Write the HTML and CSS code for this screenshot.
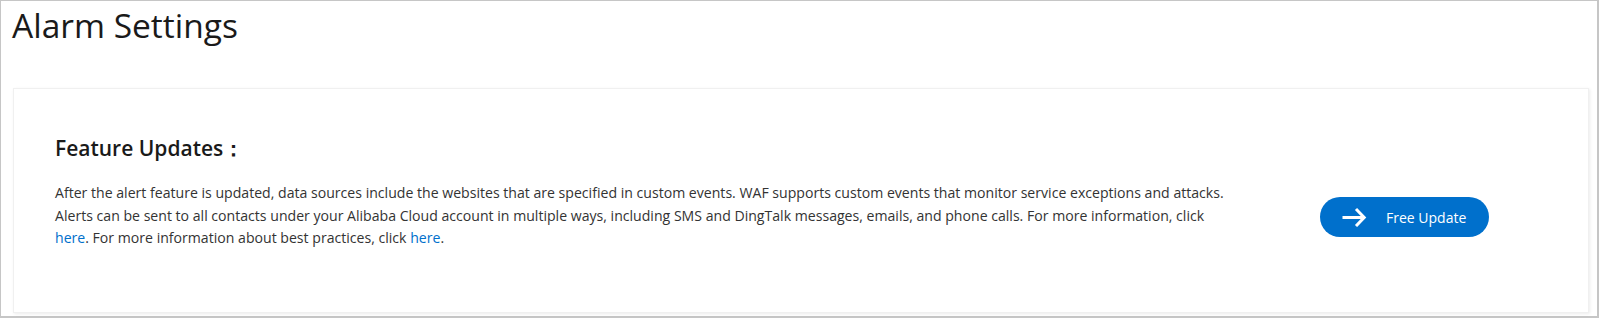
FILE: index.html
```html
<!DOCTYPE html>
<html lang="en">
<head>
<meta charset="utf-8">
<title>Alarm Settings</title>
<link rel="stylesheet" href="styles.css">
</head>
<body>
<div class="frame">
  <h1 class="page-title">Alarm Settings</h1>
  <section class="card">
    <div class="content">
      <h2 class="card-title">Feature Updates：</h2>
      <p class="desc">After the alert feature is updated, data sources include the websites that are specified in custom events. WAF supports custom events that monitor service exceptions and attacks. Alerts can be sent to all contacts under your Alibaba Cloud account in multiple ways, including SMS and DingTalk messages, emails, and phone calls. For more information, click <a href="#" class="link">here</a>. For more information about best practices, click <a href="#" class="link">here</a>.</p>
    </div>
    <button class="update-btn" type="button">
      <svg class="arrow" width="26" height="20" viewBox="0 0 26 20" aria-hidden="true">
        <path d="M1.5 10.5 H23 M15 2 L23.2 10.5 L15 19" fill="none" stroke="#fff" stroke-width="3" stroke-linecap="butt" stroke-linejoin="miter"/>
      </svg>
      <span>Free Update</span>
    </button>
  </section>
</div>
</body>
</html>
```
FILE: styles.css
```css
* { box-sizing: border-box; }
html, body { margin: 0; padding: 0; background: #fff; }
body {
  font-family: "Open Sans", "Noto Sans", sans-serif;
  color: #333;
}
.frame {
  width: 1599px;
  height: 318px;
  border: 1px solid #c6c6c6;
  border-right-width: 2px;
  border-bottom-width: 2px;
  display: flex;
  flex-direction: column;
}
.page-title {
  margin: 0;
  padding: 0 0 0 11px;
  font-size: 33.5px;
  font-weight: 400;
  line-height: 48px;
  color: #1a1a1a;
  height: 87px;
}
.card {
  margin: 0 8px 3px 12px;
  flex: 1;
  background: #fff;
  border: 1px solid #f0f0f0;
  box-shadow: 1px 1px 3px rgba(0,0,0,0.08);
  display: flex;
  align-items: flex-start;
  padding: 44px 0 0 41px;
}
.content {
  width: 1185px;
  flex: none;
}
.card-title {
  margin: 0 0 19px 0;
  font-size: 21px;
  font-weight: 600;
  color: #1a1a1a;
  line-height: 30px;
}
.desc {
  margin: 0;
  font-size: 14.1px;
  line-height: 22.5px;
  color: #333;
}
.link {
  color: #0070cc;
  text-decoration: none;
}
.update-btn {
  margin-left: 80px;
  margin-top: 64px;
  width: 169px;
  height: 40px;
  flex: none;
  border: none;
  border-radius: 20px;
  background: #0070cc;
  color: #fff;
  font-family: "Open Sans", "Noto Sans", sans-serif;
  font-size: 14px;
  display: flex;
  align-items: center;
  padding: 0 0 0 21px;
  gap: 19px;
  cursor: pointer;
}
.arrow { display: block; }
```
